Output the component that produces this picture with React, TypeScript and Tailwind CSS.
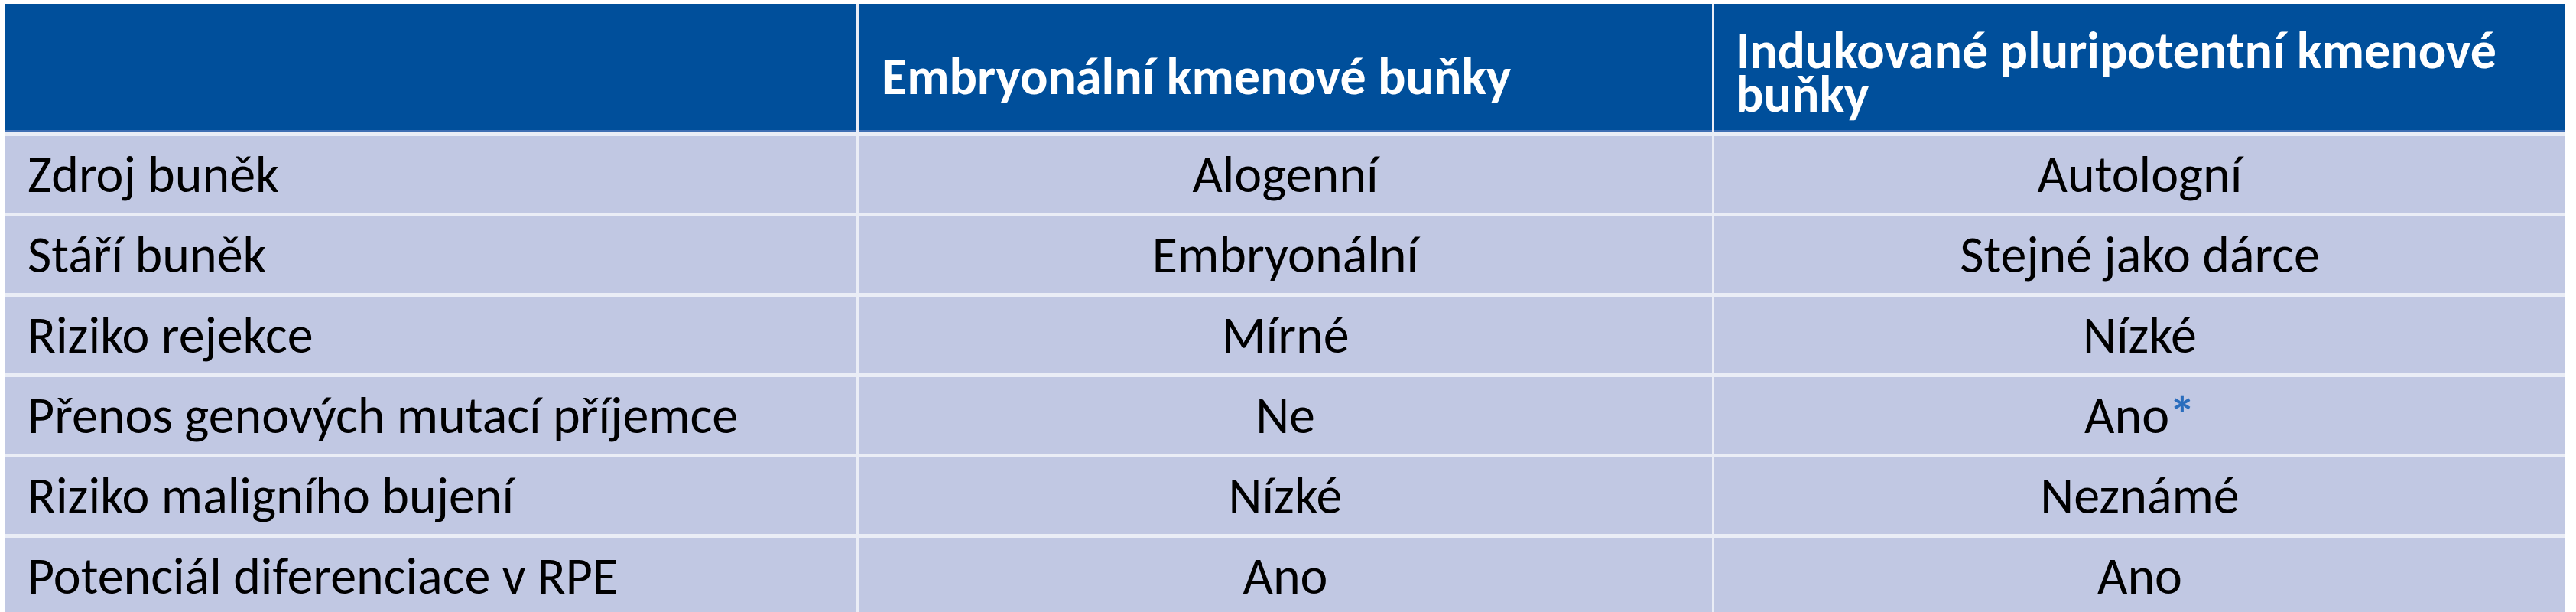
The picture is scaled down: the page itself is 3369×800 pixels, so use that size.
const rows: { label: string; esc: string; ipsc: string; mark?: boolean }[] = [
  { label: "Zdroj buněk", esc: "Alogenní", ipsc: "Autologní" },
  { label: "Stáří buněk", esc: "Embryonální", ipsc: "Stejné jako dárce" },
  { label: "Riziko rejekce", esc: "Mírné", ipsc: "Nízké" },
  { label: "Přenos genových mutací příjemce", esc: "Ne", ipsc: "Ano", mark: true },
  { label: "Riziko maligního bujení", esc: "Nízké", ipsc: "Neznámé" },
  { label: "Potenciál diferenciace v RPE", esc: "Ano", ipsc: "Ano" },
];

const font = "font-['Carlito','Lato',sans-serif]";

export default function App() {
  return (
    <div className={`w-[3369px] h-[800px] overflow-hidden bg-white pl-[6px] pt-[5px] ${font}`}>
      <div className="w-[3349px] grid grid-cols-[1114px_1116px_1113px] gap-x-[3px] gap-y-[5px] bg-[#eaedf6]">
        {/* header */}
        <div className="h-[168px] bg-[#004f9b] border-b-[3px] border-[#3f6fb3]" />
        <div className="h-[168px] bg-[#004f9b] border-b-[3px] border-[#3f6fb3] flex items-center pl-[30px] pt-[24px]">
          <span className="text-white font-bold text-[68px] leading-[56px]">Embryonální kmenové buňky</span>
        </div>
        <div className="h-[168px] bg-[#004f9b] border-b-[3px] border-[#3f6fb3] flex items-center pl-[28px] pr-[20px] pt-[12px]">
          <span className="text-white font-bold text-[68px] leading-[57px]">
            Indukované pluripotentní kmenové buňky
          </span>
        </div>

        {/* body */}
        {rows.map((row) => (
          <>
            <div key={row.label + "-l"} className="h-[100px] bg-[#c1c8e3] flex items-center pl-[30px]">
              <span className="text-black text-[68px] leading-none">{row.label}</span>
            </div>
            <div key={row.label + "-e"} className="h-[100px] bg-[#c1c8e3] flex items-center justify-center">
              <span className="text-black text-[68px] leading-none">{row.esc}</span>
            </div>
            <div key={row.label + "-i"} className="h-[100px] bg-[#c1c8e3] flex items-center justify-center">
              <span className="text-black text-[68px] leading-none">
                {row.ipsc}
                {row.mark && <span className="text-[#2a6dbd] font-bold">*</span>}
              </span>
            </div>
          </>
        ))}
      </div>
    </div>
  );
}
